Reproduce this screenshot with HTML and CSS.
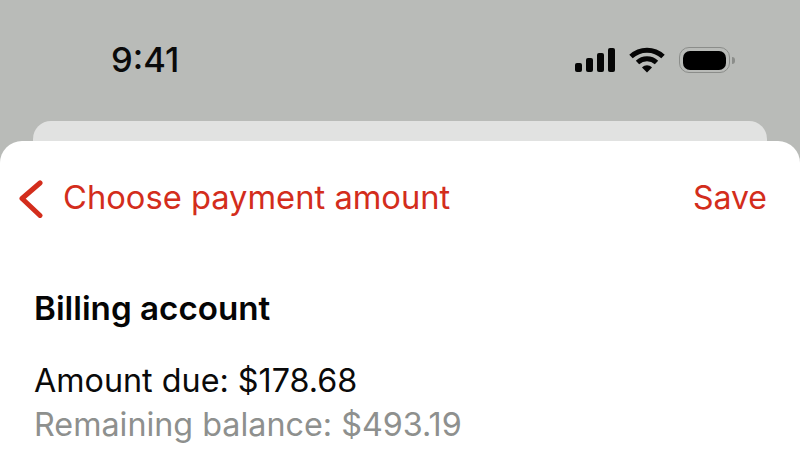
FILE: index.html
```html
<!DOCTYPE html>
<html lang="en">
<head>
  <meta charset="UTF-8" />
  <meta name="viewport" content="width=device-width, initial-scale=1" />
  <title>Choose payment amount</title>
  <link rel="stylesheet" href="styles.css">
</head>
<body>

<header class="status-bar">
  <span class="clock">9:41</span>
  <div class="status-icons">
    <svg class="icon-signal" width="40" height="24" viewBox="0 0 40 24">
      <rect x="0" y="15" width="7" height="9" rx="2" />
      <rect x="11" y="10" width="7" height="14" rx="2" />
      <rect x="22" y="5" width="7" height="19" rx="2" />
      <rect x="33" y="0" width="7" height="24" rx="2" />
    </svg>
    <svg class="icon-wifi" width="36" height="26" viewBox="0 0 36 26">
      <path d="M2 9.500C11 1 25 1 34 9.500" />
      <path d="M8.500 15.500C14 10.500 22 10.500 27.500 15.500" />
      <path class="wifi-dot" d="M13 20.500C16 17.600 20 17.600 23 20.500L18 25.500Z" />
    </svg>
    <div class="battery">
      <div class="battery-shell"><div class="battery-fill"></div></div>
      <div class="battery-cap"></div>
    </div>
  </div>
</header>

<div class="card-behind"></div>

<main class="sheet">
  <nav class="sheet-nav">
    <div class="nav-back">
      <svg width="26" height="38" viewBox="0 0 26 38">
        <path d="M22 3L4 18.500L22 35.500" />
      </svg>
      <span class="nav-title">Choose payment amount</span>
    </div>
    <span class="nav-save">Save</span>
  </nav>

  <section class="billing">
    <h2>Billing account</h2>
    <p class="due">Amount due: $178.68</p>
    <p class="remaining">Remaining balance: $493.19</p>
  </section>
</main>

</body>
</html>
```

FILE: styles.css
```css
html, body {
  height: 100%;
}
body {
  font-family: 'Inter', 'Liberation Sans', sans-serif;
  background: #b9bbb8;
  margin: 0;
  overflow: hidden;
}
.status-bar {
  height: 121px;
  box-sizing: border-box;
  padding: 39px 65px 0 111px;
  display: flex;
  justify-content: space-between;
  align-items: flex-start;
}
.clock {
  font-size: 34.500px;
  font-weight: 550;
  line-height: 42px;
  color: #0a0a0a;
}
.status-icons {
  display: flex;
  align-items: center;
  gap: 14px;
  height: 42px;
}
.icon-signal {
  fill: #050505;
}
.icon-wifi path {
  fill: none;
  stroke: #050505;
  stroke-width: 5;
}
.icon-wifi .wifi-dot {
  fill: #050505;
  stroke: none;
}
.battery {
  display: flex;
  align-items: center;
  gap: 2px;
}
.battery-shell {
  width: 51px;
  height: 26px;
  box-sizing: border-box;
  padding: 2.500px 3px;
  border: 1px solid #8b8d8a;
  border-radius: 10px;
}
.battery-fill {
  height: 100%;
  background: #000;
  border-radius: 7px;
}
.battery-cap {
  width: 3px;
  height: 7px;
  background: #8b8d8a;
  border-radius: 0 3px 3px 0;
}
.card-behind {
  height: 40px;
  margin: 0 33px -20px;
  background: #e1e2e1;
  border-radius: 18px 18px 0 0;
}
.sheet {
  position: relative;
  height: 309px;
  box-sizing: border-box;
  background: #fff;
  border-radius: 22px 22px 0 0;
  padding: 0 33px 0 34px;
}
.sheet-nav {
  height: 115px;
  display: flex;
  justify-content: space-between;
  align-items: center;
  color: #d32d1c;
}
.nav-back {
  display: flex;
  align-items: center;
  gap: 19px;
  margin-left: -16px;
}
.nav-back svg path {
  fill: none;
  stroke: #d32d1c;
  stroke-width: 5;
  stroke-linecap: round;
  stroke-linejoin: round;
}
.nav-title {
  font-size: 32.700px;
  padding-bottom: 3px;
}
.nav-save {
  font-size: 32px;
  padding-bottom: 2px;
}
.billing h2 {
  margin: 30px 0 0;
  font-size: 33.200px;
  font-weight: 600;
  line-height: 44px;
  color: #050505;
}
.billing p {
  margin: 0;
  font-size: 32.300px;
  line-height: 44px;
}
.due {
  padding-top: 29px;
  color: #0a0a0a;
}
.remaining {
  color: #8e908e;
}
```
